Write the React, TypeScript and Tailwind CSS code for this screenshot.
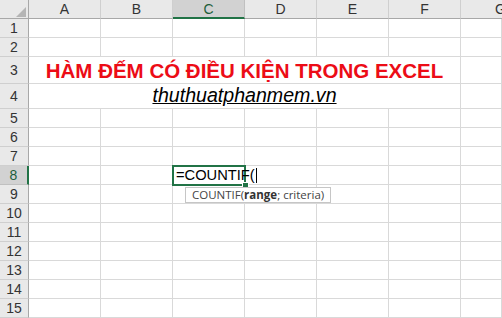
import React from 'react';

const COLS = ['A', 'B', 'C', 'D', 'E', 'F', 'G'];
const ROWS = [1, 2, 3, 4, 5, 6, 7, 8, 9, 10, 11, 12, 13, 14, 15];
const font = { fontFamily: '"Liberation Sans", Arial, sans-serif' };

const RowHead = ({ n, active }: { n: number; active?: boolean }) => (
  <div
    className={`w-[29px] shrink-0 flex items-center justify-center border-b text-[14px] leading-none ${
      active
        ? 'bg-[#d2d2d2] text-[#1d5e3b] border-r-2 border-r-[#217346] border-b-[#c0c0c0]'
        : 'bg-[#e9e9e9] text-[#333] border-r border-r-[#a8a8a8] border-b-[#cfcfcf]'
    }`}
  >
    {n}
  </div>
);

const ActiveCell = () => (
  <div className="relative w-[72px] shrink-0 border-r border-b border-[#d9d9d9]">
    <div className="absolute left-[-1px] top-[-1px] right-[-2px] bottom-[-2px] border-2 border-[#217346] z-10" />
    <div className="absolute right-[-5px] bottom-[-5px] w-[7px] h-[7px] bg-[#217346] border border-white z-20" />
    <div className="absolute left-[3px] top-0 h-full flex items-center whitespace-nowrap text-[14.7px] leading-none text-black z-10">
      =COUNTIF(
      <span className="inline-block w-px h-[15px] bg-black ml-[1px]" />
    </div>
    <div
      className="absolute left-[12px] top-[21px] h-[16px] px-[6px] flex items-center whitespace-nowrap bg-white border border-[#c6c6c6] text-[11.5px] leading-none text-[#444] z-30"
      style={{ fontFamily: '"Open Sans", "Liberation Sans", sans-serif' }}
    >
      COUNTIF(<b className="font-bold text-[#333]">range</b>; criteria)
    </div>
  </div>
);

const Cell = ({ last }: { last?: boolean }) => (
  <div className={`${last ? 'flex-1' : 'w-[72px] shrink-0'} border-r border-b border-[#d9d9d9]`} />
);

export default function App() {
  return (
    <div className="w-[502px] h-[318px] overflow-hidden bg-white select-none" style={font}>
      {/* column headers */}
      <div className="flex h-[19px]">
        <div className="w-[29px] shrink-0 bg-[#e9e9e9] border-r border-b border-[#a8a8a8] flex items-end justify-end pr-[2px] pb-[1px]">
          <svg width="10" height="10" viewBox="0 0 10 10">
            <polygon points="10,0 10,10 0,10" fill="#b5b5b5" />
          </svg>
        </div>
        {COLS.map((c, i) => (
          <div
            key={c}
            className={`${i === 6 ? 'flex-1 justify-start pl-[34px]' : 'w-[72px] shrink-0 justify-center'} flex items-center text-[14px] leading-none border-r ${
              c === 'C'
                ? 'bg-[#d2d2d2] text-[#1d5e3b] border-r-[#c0c0c0] border-b-2 border-b-[#217346]'
                : 'bg-[#e9e9e9] text-[#333] border-r-[#cfcfcf] border-b border-b-[#a8a8a8]'
            }`}
          >
            {c}
          </div>
        ))}
      </div>

      {ROWS.map((r) => {
        if (r === 3 || r === 4) {
          return (
            <div key={r} className={`flex ${r === 3 ? 'h-[27px]' : 'h-[25px]'}`}>
              <RowHead n={r} />
              <div className="w-[432px] shrink-0 border-r border-b border-[#d9d9d9] flex items-end justify-center pb-[2px]">
                {r === 3 ? (
                  <span className="text-[20.5px] leading-none font-bold text-[#ec0c16] whitespace-nowrap">
                    HÀM ĐẾM CÓ ĐIỀU KIỆN TRONG EXCEL
                  </span>
                ) : (
                  <span className="text-[19.6px] leading-none italic underline text-black whitespace-nowrap">
                    thuthuatphanmem.vn
                  </span>
                )}
              </div>
              <Cell last />
            </div>
          );
        }
        return (
          <div key={r} className="flex h-[19px]">
            <RowHead n={r} active={r === 8} />
            {COLS.map((c, i) =>
              r === 8 && c === 'C' ? <ActiveCell key={c} /> : <Cell key={c} last={i === 6} />
            )}
          </div>
        );
      })}
    </div>
  );
}
